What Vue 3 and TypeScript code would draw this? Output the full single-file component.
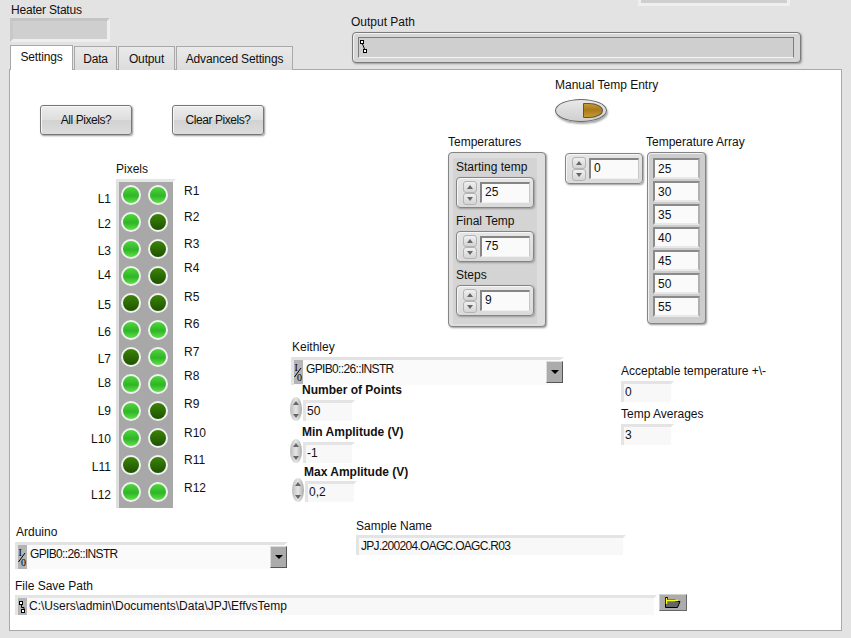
<script setup lang="ts">
const tabs = [
  { name: 'Settings', width: 63 },
  { name: 'Data', width: 43 },
  { name: 'Output', width: 57 },
  { name: 'Advanced Settings', width: 117 }
];

// on/off state of each pixel, top to bottom
const leftOn = [1, 1, 1, 1, 0, 1, 0, 1, 1, 1, 0, 1];
const rightOn = [1, 0, 0, 0, 0, 1, 1, 1, 0, 0, 0, 1];

// LabVIEW labels were dragged by hand so they don't line up with the LEDs
const leftLabelY = [192, 217, 244, 268, 298, 325, 352, 376, 404, 432, 460, 488];
const rightLabelY = [184, 210, 237, 261, 290, 317, 345, 369, 397, 426, 453, 481];

function gapBefore(ys: number[], i: number) {
  const prev = i === 0 ? 179 : ys[i - 1] + 14;
  return { marginTop: ys[i] - prev + 'px' };
}

const temps = [
  { label: 'Starting temp', value: '25' },
  { label: 'Final Temp', value: '75' },
  { label: 'Steps', value: '9' }
];
const tempArray = ['25', '30', '35', '40', '45', '50', '55'];

const amplitudes = [
  { label: 'Number of Points', value: '50', cls: '' },
  { label: 'Min Amplitude (V)', value: '-1', cls: '' },
  { label: 'Max Amplitude (V)', value: '0,2', cls: 'shifted' }
];
</script>

<template>
  <div class="page">
    <header class="top">
      <div class="heater">
        <div class="label">Heater Status</div>
        <div class="heater-box"></div>
      </div>
      <div class="output">
        <div class="cut-off"></div>
        <div class="label">Output Path</div>
        <div class="output-box">
          <div class="output-inner">
            <svg class="path-icon" width="9" height="17" viewBox="0 0 9 17">
              <rect x="1.5" y="2.5" width="3" height="3" fill="#fff" stroke="#000" />
              <path d="M3.5 6 L5.5 11" stroke="#000" fill="none" />
              <rect x="4.5" y="11.5" width="3" height="3" fill="#fff" stroke="#000" />
            </svg>
          </div>
        </div>
      </div>
    </header>

    <nav class="tabs">
      <div
        v-for="(tab, i) in tabs"
        :key="tab.name"
        :class="['tab', { active: i === 0 }]"
        :style="{ width: tab.width + 'px' }"
      >
        {{ tab.name }}
      </div>
    </nav>

    <main class="panel">
      <div class="upper">
        <section class="left-col">
          <div class="buttons">
            <button class="btn">All Pixels?</button>
            <button class="btn">Clear Pixels?</button>
          </div>
          <div class="pixels-title label">Pixels</div>
          <div class="pixels">
            <div class="names names-left">
              <div v-for="(y, i) in leftLabelY" :key="i" :style="gapBefore(leftLabelY, i)">L{{ i + 1 }}</div>
            </div>
            <div class="led-block">
              <div v-for="(on, i) in leftOn" :key="i" class="led-row">
                <span :class="['led', { on: on }]"></span>
                <span :class="['led', { on: rightOn[i] }]"></span>
              </div>
            </div>
            <div class="names names-right">
              <div v-for="(y, i) in rightLabelY" :key="i" :style="gapBefore(rightLabelY, i)">R{{ i + 1 }}</div>
            </div>
          </div>
        </section>

        <section class="right-col">
          <div class="manual">
            <div class="label">Manual Temp Entry</div>
            <div class="toggle"><span class="toggle-lamp"></span></div>
          </div>

          <div class="temp-row">
            <div class="temp-group">
              <div class="label">Temperatures</div>
              <div class="cluster">
                <div class="cluster-inner">
                  <div v-for="t in temps" :key="t.label" class="cluster-item">
                    <div class="label">{{ t.label }}</div>
                    <div class="numeric">
                      <div class="spin"><span class="up"></span><span class="down"></span></div>
                      <div class="num-field">{{ t.value }}</div>
                    </div>
                  </div>
                </div>
              </div>
            </div>
            <div class="numeric index">
              <div class="spin"><span class="up"></span><span class="down"></span></div>
              <div class="num-field">0</div>
            </div>
            <div class="array-group">
              <div class="label">Temperature Array</div>
              <div class="array">
                <div v-for="(v, i) in tempArray" :key="i" class="array-cell">{{ v }}</div>
              </div>
            </div>
          </div>

          <div class="lower">
            <div class="keithley">
              <div class="label">Keithley</div>
              <div class="ring ring-wide">
                <span class="io">
                  <svg width="9" height="24" viewBox="0 0 9 24">
                    <text x="0.5" y="11" class="io-text">I</text>
                    <path d="M0.5 17 L7 8" stroke="#000" />
                    <text x="3" y="21" class="io-text">0</text>
                  </svg>
                </span>
                <span class="ring-text">GPIB0::26::INSTR</span>
                <span class="drop"></span>
              </div>
              <div v-for="a in amplitudes" :key="a.label" :class="['amp', a.cls]">
                <div class="amp-label">{{ a.label }}</div>
                <div class="amp-row">
                  <div class="oval"><span class="up"></span><span class="down"></span></div>
                  <div class="flat amp-field">{{ a.value }}</div>
                </div>
              </div>
            </div>
            <div class="accept">
              <div class="label">Acceptable temperature +\-</div>
              <div class="flat accept-field">0</div>
              <div class="label accept-second">Temp Averages</div>
              <div class="flat accept-field">3</div>
            </div>
          </div>
        </section>
      </div>

      <div class="bottom">
        <div class="arduino">
          <div class="label">Arduino</div>
          <div class="ring ring-arduino">
            <span class="io">
              <svg width="9" height="24" viewBox="0 0 9 24">
                <text x="0.5" y="11" class="io-text">I</text>
                <path d="M0.5 17 L7 8" stroke="#000" />
                <text x="3" y="21" class="io-text">0</text>
              </svg>
            </span>
            <span class="ring-text">GPIB0::26::INSTR</span>
            <span class="drop"></span>
          </div>
        </div>
        <div class="sample">
          <div class="label">Sample Name</div>
          <div class="flat sample-field">JPJ.200204.OAGC.OAGC.R03</div>
        </div>
      </div>

      <div class="file">
        <div class="label">File Save Path</div>
        <div class="file-row">
          <div class="flat file-field">
            <svg class="file-icon" width="9" height="17" viewBox="0 0 9 17">
              <rect x="1.5" y="3.5" width="3" height="3" fill="#fff" stroke="#000" />
              <path d="M3.5 7 L3.5 9.5 L6 9.5 L6 11" stroke="#000" fill="none" />
              <rect x="3.5" y="11.5" width="3" height="3" fill="#fff" stroke="#000" />
            </svg>
            <span>C:\Users\admin\Documents\Data\JPJ\EffvsTemp</span>
          </div>
          <button class="folder">
            <svg width="16" height="11" viewBox="0 0 16 11">
              <path d="M0.5 0.5 H2.5 V3 H10.5 V4.5 H15 L12.5 10.5 H0.5 Z" fill="#666" stroke="#000" />
              <path d="M1.5 1 V7 M1.5 3.5 H13" stroke="#ff0" stroke-width="1.4" fill="none" />
            </svg>
          </button>
        </div>
      </div>
    </main>
  </div>
</template>

<style>
html, body {
  margin: 0;
  background: #e3e3e3;
}
</style>

<style scoped>
.page {
  width: 851px;
  height: 638px;
  overflow: hidden;
  background: #e3e3e3;
  color: #111;
  font-family: "Liberation Sans", Arial, sans-serif;
  font-size: 12px;
  line-height: 14px;
}

.top {
  display: flex;
  height: 45px;
}

.heater {
  margin-left: 11px;
  width: 340px;
  padding-top: 3px;
}

.heater .label {
  letter-spacing: -0.2px;
}

.heater-box {
  box-sizing: border-box;
  width: 100px;
  height: 24px;
  margin: 1px 0 0 -1px;
  background: #cfcfcf;
  border: 3px solid #eeeeee;
  border-top-color: #c4c4c4;
  border-left-color: #c8c8c8;
}

.cut-off {
  box-sizing: border-box;
  width: 152px;
  height: 6px;
  margin: 0 0 9px 287px;
  background: #cfcfcf;
  border: 3px solid #efefef;
  border-top: 0;
}

.output-box {
  box-sizing: border-box;
  width: 449px;
  height: 31px;
  margin: 3px 0 0 1px;
  padding: 4px 6px 4px 5px;
  background: #d6d6d6;
  border: 1px solid #7b7b7b;
  border-radius: 4px;
  box-shadow: inset 1px 1px 0 #f2f2f2, 1px 1px 2px #999;
}

.output-inner {
  box-sizing: border-box;
  height: 21px;
  background: #cfcfcf;
  border: 1px solid #7c7c7c;
  border-bottom-color: #f4f4f4;
}

.path-icon {
  display: block;
}

.tabs {
  display: flex;
  margin-left: 10px;
  height: 24px;
  position: relative;
  z-index: 1;
}

.tab {
  box-sizing: border-box;
  height: 24px;
  padding-top: 5px;
  margin-top: 1px;
  margin-right: 1px;
  text-align: center;
  letter-spacing: -0.15px;
  background: linear-gradient(#eaeaea, #dcdcdc);
  border: 1px solid #a9a9a9;
  border-bottom: 0;
}

.tab.active {
  height: 25px;
  margin-top: 0;
  padding-top: 4px;
  background: #fff;
}

.panel {
  box-sizing: border-box;
  width: 833px;
  height: 562px;
  margin-left: 9px;
  background: #fff;
  border: 1px solid #a9a9a9;
}

.upper {
  display: flex;
  height: 449px;
}

.left-col {
  width: 282px;
  flex: none;
}

.buttons {
  display: flex;
  gap: 40px;
  padding: 35px 0 0 30px;
}

.btn {
  box-sizing: border-box;
  width: 92px;
  height: 30px;
  padding: 0;
  font: inherit;
  letter-spacing: -0.45px;
  color: inherit;
  background: linear-gradient(#ececec, #dedede 50%, #d2d2d2 51%, #dcdcdc);
  border: 1px solid #777;
  border-radius: 3px;
  box-shadow: inset 1px 1px 0 #f6f6f6, 1px 1px 2px #999;
}

.pixels-title {
  margin: 27px 0 0 106px;
}

.pixels {
  display: flex;
  margin-top: 3px;
  height: 329px;
}

.names-left {
  width: 101px;
  text-align: right;
}

.names-right {
  margin-left: 8px;
}

.led-block {
  box-sizing: border-box;
  width: 60px;
  height: 329px;
  margin-left: 5px;
  padding-top: 3px;
  background: #a8a8a8;
  background-clip: padding-box;
  border-top: 3px solid #e6e6e6;
  border-left: 3px solid #e0e0e0;
  border-right: 3px solid transparent;
}

.led-row {
  display: flex;
  gap: 7px;
  height: 27px;
  padding-left: 2px;
}

.led {
  box-sizing: border-box;
  width: 20px;
  height: 20px;
  border-radius: 50%;
  border: 2px solid #f2f2f2;
  background: linear-gradient(#3b8406, #1e5200);
}

.led.on {
  background: linear-gradient(#4fd63c, #2fb526 55%, #5fe04a);
}

.right-col {
  flex: 1;
}

.manual {
  margin: 8px 0 0 263px;
}

.toggle {
  box-sizing: border-box;
  display: flex;
  align-items: center;
  justify-content: flex-end;
  width: 52px;
  height: 23px;
  margin-top: 7px;
  padding-right: 3px;
  background: linear-gradient(#e8e8e8, #cfcfcf);
  border: 1px solid #666;
  border-radius: 50%;
  box-shadow: 1px 2px 2px #aaa;
}

.toggle-lamp {
  box-sizing: border-box;
  width: 20px;
  height: 15px;
  background: linear-gradient(#c9982f, #a77a1c 45%, #c9982f);
  border: 1px solid #555;
  border-radius: 1px 70% 70% 1px / 1px 50% 50% 1px;
}

.temp-row {
  display: flex;
  margin: 13px 0 0 156px;
}

.temp-group {
  width: 117px;
}

.cluster {
  box-sizing: border-box;
  width: 98px;
  height: 175px;
  margin-top: 3px;
  padding: 5px 8px 4px 4px;
  background: #dedede;
  border: 1px solid #858585;
  border-radius: 4px;
  box-shadow: 1px 1px 2px #999;
}

.cluster-inner {
  height: 100%;
  padding: 2px 0 0 3px;
  background: #d4d4d4;
}

.cluster-item + .cluster-item {
  margin-top: 6px;
}

.numeric {
  box-sizing: border-box;
  display: flex;
  align-items: center;
  gap: 3px;
  width: 78px;
  height: 31px;
  margin-top: 3px;
  padding-left: 6px;
  background: linear-gradient(#e6e6e6, #dadada);
  border: 1px solid #858585;
  border-radius: 4px;
  box-shadow: inset 1px 1px 0 #f6f6f6, 1px 1px 2px #999;
}

.numeric.index {
  margin-top: 18px;
  flex: none;
}

.spin {
  display: flex;
  flex-direction: column;
  width: 14px;
  flex: none;
}

.spin span {
  box-sizing: border-box;
  display: block;
  position: relative;
  height: 12px;
  background: linear-gradient(#f0f0f0, #d4d4d4);
  border: 1px solid #b4b4b4;
  border-radius: 3px;
}

.up::after,
.down::after {
  content: "";
  position: absolute;
  left: 50%;
  top: 50%;
  margin: -2px 0 0 -3px;
  border-left: 3px solid transparent;
  border-right: 3px solid transparent;
}

.up::after {
  border-bottom: 4px solid #666;
}

.down::after {
  border-top: 4px solid #666;
}

.num-field {
  box-sizing: border-box;
  width: 50px;
  height: 21px;
  padding: 1px 0 0 3px;
  background: #fafafa;
  border: 2px solid #858585;
  border-bottom: 1px solid #f0f0f0;
  border-right: 1px solid #c8c8c8;
}

.array-group {
  margin-left: 3px;
  flex: none;
}

.array {
  box-sizing: border-box;
  display: flex;
  flex-direction: column;
  gap: 2px;
  width: 59px;
  height: 172px;
  margin: 3px 0 0 1px;
  padding: 5px 5px 0;
  background: #cdcdcd;
  border: 1px solid #858585;
  border-radius: 4px;
  box-shadow: inset 1px 1px 0 #f0f0f0, 1px 1px 2px #999;
}

.array-cell {
  box-sizing: border-box;
  height: 21px;
  padding: 2px 0 0 3px;
  background: #fafafa;
  border: 2px solid #8a8a8a;
  border-bottom-color: #e8e8e8;
  border-right-color: #b0b0b0;
}

.lower {
  display: flex;
  margin-top: 13px;
}

.keithley {
  width: 329px;
  flex: none;
}

.ring {
  box-sizing: border-box;
  display: flex;
  align-items: flex-start;
  background: #fafafa;
  background-clip: padding-box;
  border-top: 3px solid #e2e2e2;
  border-left: 3px solid #e4e4e4;
  border-right: 4px solid transparent;
  position: relative;
}

.ring-wide {
  width: 273px;
  height: 28px;
  margin: 3px 0 0 -1px;
}

.ring-arduino {
  width: 273px;
  height: 27px;
  margin-top: 3px;
}

.io {
  flex: none;
  width: 9px;
  height: 24px;
  background: #b4b4b4;
}

.io svg {
  display: block;
}

.io-text {
  font-family: "Liberation Serif", serif;
  font-size: 10px;
  fill: #000;
}

.ring-text {
  margin: 2px 0 0 3px;
  letter-spacing: -0.65px;
}

.drop {
  position: absolute;
  right: -3px;
  top: 1px;
  box-sizing: border-box;
  width: 17px;
  height: 22px;
  background: #ababab;
  border: 1px solid #dcdcdc;
  border-right-color: #555;
  border-bottom-color: #555;
}

.drop::after {
  content: "";
  position: absolute;
  left: 4px;
  top: 8px;
  border-left: 4px solid transparent;
  border-right: 4px solid transparent;
  border-top: 4px solid #000;
}

.amp {
  margin-left: -2px;
}

.amp-label {
  margin-left: 12px;
  font-weight: bold;
}

.amp + .amp {
  margin-top: 4px;
}

.ring + .amp {
  margin-top: -2px;
}

.amp.shifted {
  margin-left: 0;
  margin-top: 2px;
}

.amp-row {
  display: flex;
  align-items: flex-start;
}

.shifted .amp-row {
  margin-top: -1px;
}

.oval {
  box-sizing: border-box;
  position: relative;
  width: 12px;
  height: 24px;
  background: linear-gradient(90deg, #bbb, #e6e6e6 50%, #aaa);
  border-radius: 50%;
}

.oval span {
  position: absolute;
  left: 0;
  right: 0;
  height: 11px;
}

.oval .up {
  top: 0;
}

.oval .down {
  bottom: 0;
}

.flat {
  box-sizing: border-box;
  background: #f8f8f8;
  background-clip: padding-box;
  border-top: 3px solid #e4e4e4;
  border-left: 3px solid #e4e4e4;
  border-right: 3px solid transparent;
}

.amp-field {
  width: 52px;
  height: 21px;
  margin: 3px 0 0 1px;
  padding: 1px 0 0 1px;
}

.accept {
  margin-top: 24px;
}

.accept-field {
  width: 53px;
  height: 21px;
  margin-top: 3px;
  padding: 1px 0 0 1px;
}

.accept-second {
  margin-top: 5px;
}

.bottom {
  display: flex;
  height: 60px;
}

.arduino {
  margin: 6px 0 0 5px;
  width: 341px;
}

.arduino .label {
  margin-left: 1px;
}

.sample-field {
  width: 270px;
  height: 20px;
  margin-top: 2px;
  padding: 1px 0 0 2px;
  letter-spacing: -0.7px;
}

.file {
  margin-left: 5px;
}

.file-row {
  display: flex;
  align-items: flex-start;
  margin-top: 2px;
}

.file-field {
  display: flex;
  width: 642px;
  height: 20px;
}

.file-icon {
  flex: none;
  background: #b4b4b4;
  height: 17px;
}

.file-field span {
  margin: 1px 0 0 2px;
}

.folder {
  box-sizing: border-box;
  display: flex;
  align-items: center;
  justify-content: center;
  width: 28px;
  height: 17px;
  margin: -1px 0 0 2px;
  padding: 0;
  background: #acacac;
  border: 1px solid #d0d0d0;
  border-right-color: #666;
  border-bottom-color: #666;
}
</style>
